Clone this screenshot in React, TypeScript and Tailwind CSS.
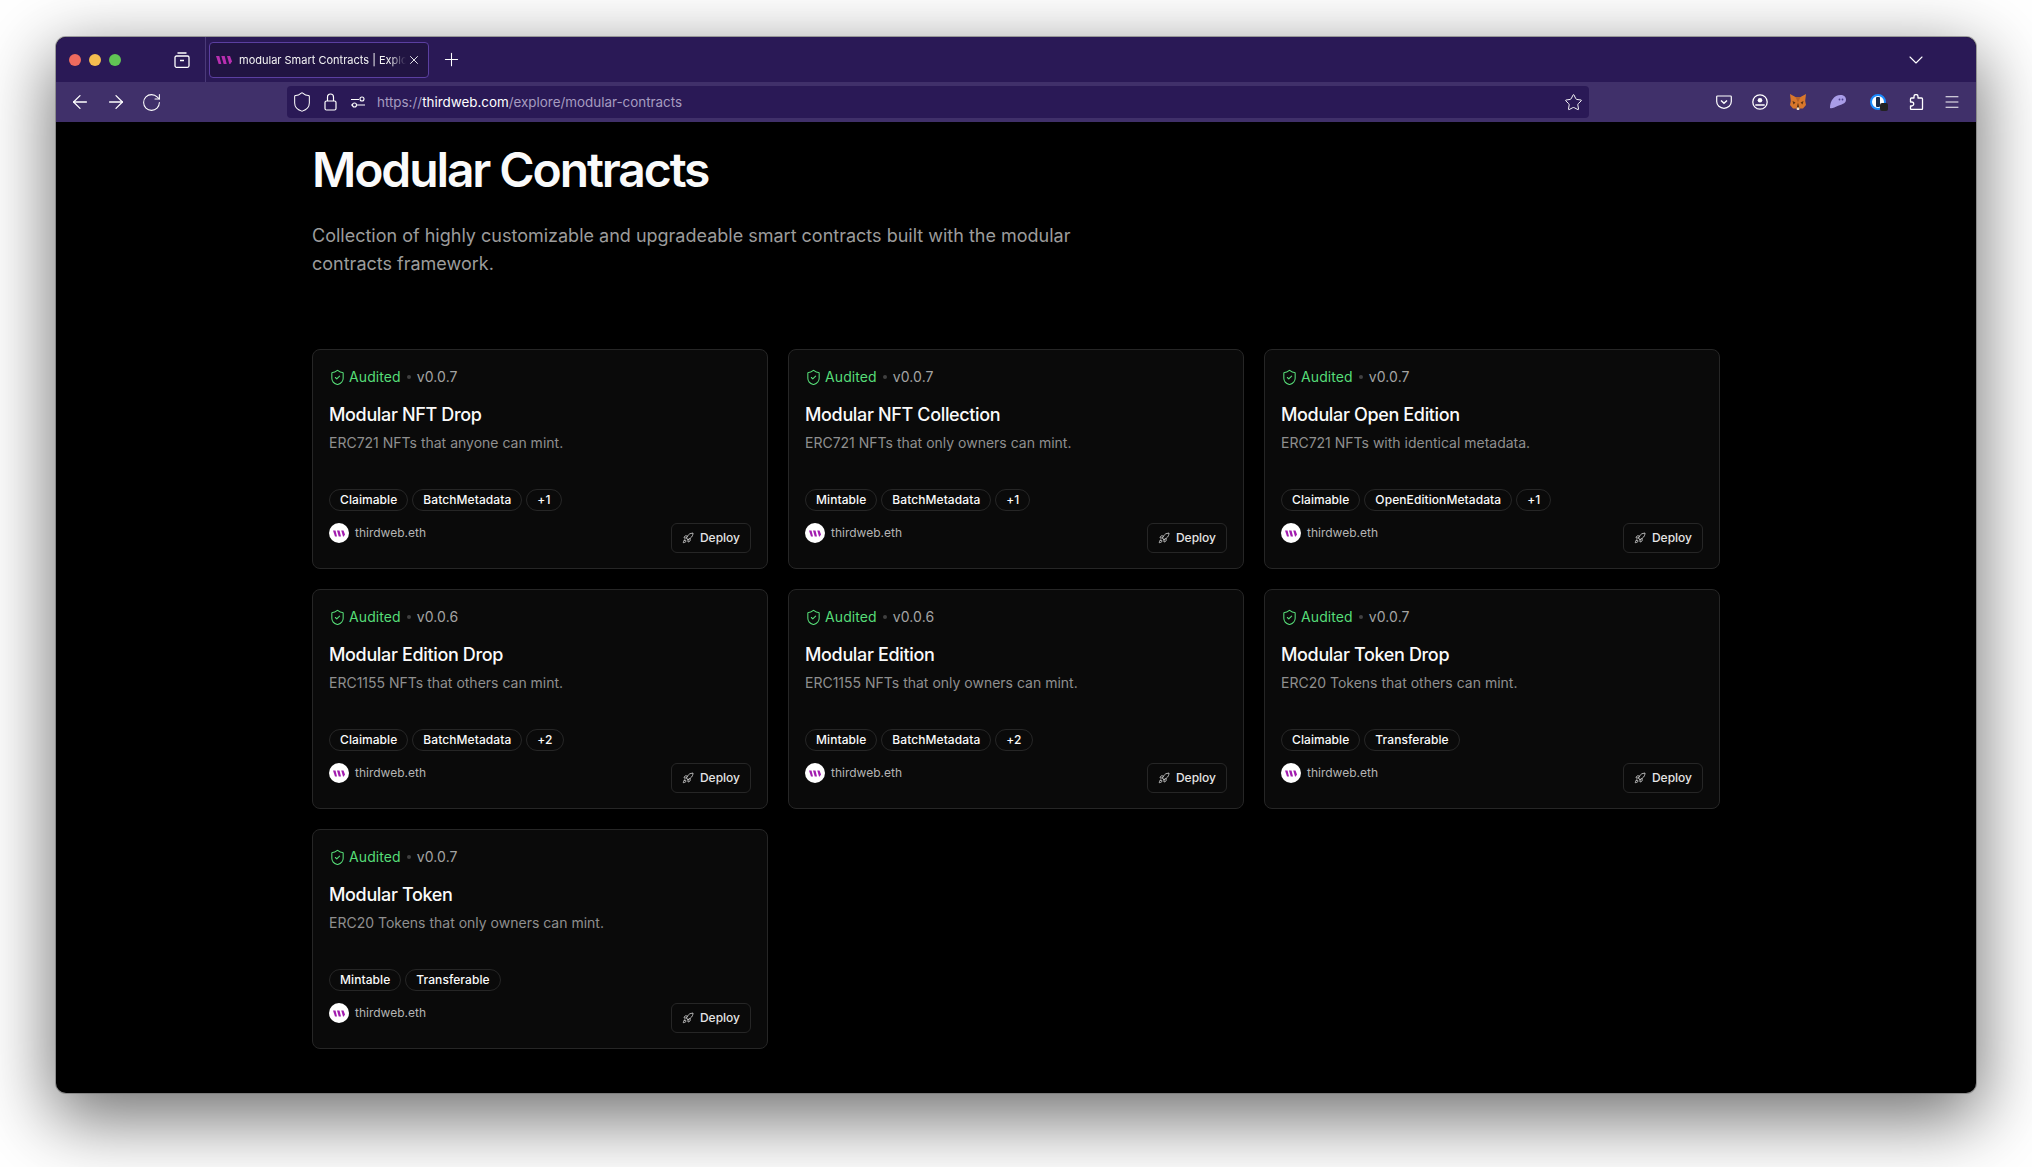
import { ArrowLeft, ArrowRight, ChevronDown, Menu, Plus, RotateCw, Rocket, Shield, ShieldCheck, Star, X } from 'lucide-react';

interface Contract {
  version: string;
  title: string;
  description: string;
  tags: string[];
}

const contracts: Contract[] = [
  { version: 'v0.0.7', title: 'Modular NFT Drop', description: 'ERC721 NFTs that anyone can mint.', tags: ['Claimable', 'BatchMetadata', '+1'] },
  { version: 'v0.0.7', title: 'Modular NFT Collection', description: 'ERC721 NFTs that only owners can mint.', tags: ['Mintable', 'BatchMetadata', '+1'] },
  { version: 'v0.0.7', title: 'Modular Open Edition', description: 'ERC721 NFTs with identical metadata.', tags: ['Claimable', 'OpenEditionMetadata', '+1'] },
  { version: 'v0.0.6', title: 'Modular Edition Drop', description: 'ERC1155 NFTs that others can mint.', tags: ['Claimable', 'BatchMetadata', '+2'] },
  { version: 'v0.0.6', title: 'Modular Edition', description: 'ERC1155 NFTs that only owners can mint.', tags: ['Mintable', 'BatchMetadata', '+2'] },
  { version: 'v0.0.7', title: 'Modular Token Drop', description: 'ERC20 Tokens that others can mint.', tags: ['Claimable', 'Transferable'] },
  { version: 'v0.0.7', title: 'Modular Token', description: 'ERC20 Tokens that only owners can mint.', tags: ['Mintable', 'Transferable'] },
];

function ThirdwebLogo({ className }: { className: string }) {
  return (
    <svg viewBox="0 0 24 14" className={className} fill="currentColor">
      <path d="M0 1h5l3 12H4z" />
      <path d="M8 1h5l3 12h-4.5z" />
      <path d="M16.5 1H21l3 8-2.500 4h-1.500z" />
    </svg>
  );
}

function TabsIcon() {
  return (
    <svg viewBox="0 0 16 16" className="size-[16px] text-white" fill="none" stroke="currentColor" strokeWidth="1.3">
      <path d="M3.500 1h9" />
      <rect x="1" y="4" width="14" height="11.300" rx="1.500" />
      <path d="M6 8.500h4" />
    </svg>
  );
}

function LockIcon() {
  return (
    <svg viewBox="0 0 13 18" className="h-[18px] w-[13px] text-white" fill="none" stroke="currentColor" strokeWidth="1.2">
      <rect x="1" y="8" width="11" height="9" rx="1.500" />
      <path d="M3.500 8V4a3 3 0 0 1 6 0v4" />
    </svg>
  );
}

function PermissionsIcon() {
  return (
    <svg viewBox="0 0 14 12" className="h-[12px] w-[14px] text-white" fill="none" stroke="currentColor" strokeWidth="1.1">
      <path d="M0 3.500h8M0 9h1.500M6 9h8" />
      <circle cx="11" cy="3" r="2" />
      <circle cx="3.500" cy="9" r="2" />
    </svg>
  );
}

function PuzzleIcon() {
  return (
    <svg viewBox="0 0 16 16" className="size-[16px] text-white" fill="none" stroke="currentColor" strokeWidth="1.3" strokeLinejoin="round">
      <path d="M6 4V2.500a2 2 0 0 1 4 0V4h3.500a1 1 0 0 1 1 1v9.500a1 1 0 0 1-1 1H3.500a1 1 0 0 1-1-1V12h1.200a2 2 0 0 0 0-4H2.500V5a1 1 0 0 1 1-1z" />
    </svg>
  );
}

function PocketIcon() {
  return (
    <svg viewBox="0 0 16 14" className="h-[14px] w-[16px] text-white" fill="none" stroke="currentColor" strokeWidth="1.2">
      <path d="M1.500 1h13a.8.8 0 0 1 .8.8v4.700a7.300 6.800 0 0 1-14.600 0V1.800A.8.8 0 0 1 1.500 1z" />
      <path d="M5 5.500l3 2.800 3-2.800" strokeWidth="1.4" />
    </svg>
  );
}

function AccountIcon() {
  return (
    <svg viewBox="0 0 16 16" className="size-[16px] text-white" fill="none" stroke="currentColor" strokeWidth="1.3">
      <circle cx="8" cy="8" r="7.200" />
      <circle cx="8" cy="6.200" r="2.300" fill="currentColor" stroke="none" />
      <path d="M3.300 11h9.400" strokeWidth="1.6" />
    </svg>
  );
}

function FoxIcon() {
  return (
    <svg viewBox="0 0 16 16" className="size-[16px]">
      <path d="M0 0l5.500 3h5L16 0l-.8 7 .8 4-3 3.500H10L8 16l-2-1.500H3L0 11l.8-4z" fill="#d9772b" />
      <path d="M5.500 3h5L8 8.500z" fill="#b5622a" />
      <path d="M8 8.500L6.500 14.500h3zM2.500 7l3 1.500-2 2zM13.500 7l-3 1.500 2 2z" fill="#5f3312" />
      <path d="M6.800 13.500h2.400V16H6.800z" fill="#efe0cd" />
    </svg>
  );
}

function GhostIcon() {
  return (
    <svg viewBox="0 0 16 14" className="h-[14px] w-[16px]">
      <path d="M0 13C0 6 4 0 10.500 0 13.800 0 16 2 16 4.800 16 9 11 9.500 7.500 11 5 12 2 14 0 13z" fill="#a99de8" />
      <circle cx="9.500" cy="4.500" r=".9" fill="#4b3f8f" />
      <circle cx="12.500" cy="4.500" r=".9" fill="#4b3f8f" />
    </svg>
  );
}

function OnePasswordIcon() {
  return (
    <span className="relative block size-[16px] rounded-full border-[2px] border-[#1a8cff] bg-white">
      <span className="absolute top-[1px] left-[4px] h-[10px] w-[4px] rounded-[1px] bg-[#1a2a4a]" />
      <span className="absolute -right-[4px] -bottom-[3px] size-[8px] rounded-[2px] bg-[#222222]" />
    </span>
  );
}

function ContractCard({ contract }: { contract: Contract }) {
  return (
    <div className="flex h-[220px] flex-col rounded-lg border border-[#262626] bg-[#0a0a0a] px-4 pt-[17px]">
      <div className="flex h-[20px] items-center text-sm tracking-[0.1px]">
        <ShieldCheck className="mr-[3px] size-[17px] text-[#56dd78]" strokeWidth={1.5} />
        <span className="text-[#56dd78]">Audited</span>
        <span className="mx-[6px] size-[4px] rounded-full bg-[#404040]" />
        <span className="text-[#a3a3a3]">{contract.version}</span>
      </div>
      <h2 className="mt-[18px] text-lg leading-[20px] font-medium tracking-[-0.35px] text-[#fafafa]">{contract.title}</h2>
      <p className="mt-[8px] text-sm leading-[20px] text-[#8f8f8f]">{contract.description}</p>
      <div className="mt-[36px] flex gap-[4px]">
        {contract.tags.map((tag) => (
          <span key={tag} className="flex h-[22px] items-center rounded-full border border-[#262626] px-[10px] text-xs font-medium tracking-[0.08px] text-[#fafafa]">
            {tag}
          </span>
        ))}
      </div>
      <div className="mt-[12px] flex items-start justify-between">
        <div className="flex items-center gap-[6px]">
          <span className="flex size-[20px] items-center justify-center rounded-full bg-white">
            <ThirdwebLogo className="h-[7px] w-[12px] text-[#a21caf]" />
          </span>
          <span className="text-xs text-[#b5b5b5]">thirdweb.eth</span>
        </div>
        <button className="flex h-[30px] items-center gap-[6px] rounded-md border border-[#262626] px-[10px] text-xs font-medium text-[#e5e5e5]">
          <Rocket className="size-[12px]" strokeWidth={1.5} />
          Deploy
        </button>
      </div>
    </div>
  );
}

export default function App() {
  return (
    <div className="h-[1167px] w-[2032px] overflow-hidden bg-white pt-[37px] pl-[56px] font-['Inter',sans-serif]">
      <div className="flex h-[1056px] w-[1920px] flex-col overflow-hidden rounded-[10px] bg-black shadow-[0_0_0_1px_rgba(110,110,110,0.6),0_22px_70px_4px_rgba(0,0,0,0.56)]">
        <div className="flex h-[45px] shrink-0 items-center bg-[#2a1956]">
          <div className="ml-[13px] flex gap-[8px]">
            <span className="size-[12px] rounded-full bg-[#ee6a5e]" />
            <span className="size-[12px] rounded-full bg-[#f5bd4f]" />
            <span className="size-[12px] rounded-full bg-[#61c454]" />
          </div>
          <div className="ml-[53px]"><TabsIcon /></div>
          <div className="ml-[15px] h-[45px] w-px bg-[#4a3a78]" />
          <div className="mt-[1px] ml-[3px] flex h-[36px] w-[220px] items-center rounded-[4px] border border-[#5b3fa0] bg-[#211442] pl-[6px]">
            <ThirdwebLogo className="h-[10px] w-[16px] shrink-0 text-[#b82fb0]" />
            <span className="ml-[7px] w-[167px] shrink-0 overflow-hidden pt-[1px] text-[11px] whitespace-nowrap text-[#f4f4f4] [mask-image:linear-gradient(to_right,black_90%,transparent)]">modular Smart Contracts | Explore</span>
            <X className="ml-[1px] size-[14px] shrink-0 text-white" strokeWidth={1.5} />
          </div>
          <Plus className="ml-[12px] size-[21px] text-white" strokeWidth={1.2} />
          <ChevronDown className="mr-[48px] ml-auto size-[24px] text-white" strokeWidth={1.1} />
        </div>
        <div className="flex h-[40px] shrink-0 items-center bg-[#40306a]">
          <ArrowLeft className="ml-[13px] size-[22px] text-white" strokeWidth={1.4} />
          <ArrowRight className="ml-[14px] size-[22px] text-white" strokeWidth={1.4} />
          <RotateCw className="ml-[14px] size-[21px] text-white" strokeWidth={1.2} />
          <div className="ml-[125px] flex h-[32px] w-[1302px] shrink-0 items-center rounded-[4px] bg-[#2a1956]">
            <Shield className="ml-[4px] size-[22px] text-white" strokeWidth={1.1} />
            <span className="ml-[11px]"><LockIcon /></span>
            <span className="ml-[14px]"><PermissionsIcon /></span>
            <span className="ml-[12px] text-[13.4px] text-[#a69cc0]">
              https://<span className="text-white">thirdweb.com</span>/explore/modular-contracts
            </span>
            <Star className="mr-[6px] ml-auto size-[19px] text-white" strokeWidth={1.2} />
          </div>
          <div className="ml-[127px]"><PocketIcon /></div>
          <div className="ml-[20px]"><AccountIcon /></div>
          <div className="ml-[22px]"><FoxIcon /></div>
          <div className="ml-[24px]"><GhostIcon /></div>
          <div className="ml-[24px]"><OnePasswordIcon /></div>
          <div className="ml-[22px]"><PuzzleIcon /></div>
          <Menu className="ml-[19px] size-[18px] text-white" strokeWidth={1.3} />
        </div>
        <main className="px-[256px] pt-[24px]">
          <h1 className="text-5xl leading-[48px] font-semibold tracking-[-2.1px] text-[#fafafa]">Modular Contracts</h1>
          <p className="mt-[28px] w-[800px] text-lg leading-[28px] text-[#9c9c9c]">
            Collection of highly customizable and upgradeable smart contracts built with the modular contracts framework.
          </p>
          <div className="mt-[71px] grid w-[1408px] grid-cols-3 gap-[20px]">
            {contracts.map((contract) => (
              <ContractCard key={contract.title} contract={contract} />
            ))}
          </div>
        </main>
      </div>
    </div>
  );
}
